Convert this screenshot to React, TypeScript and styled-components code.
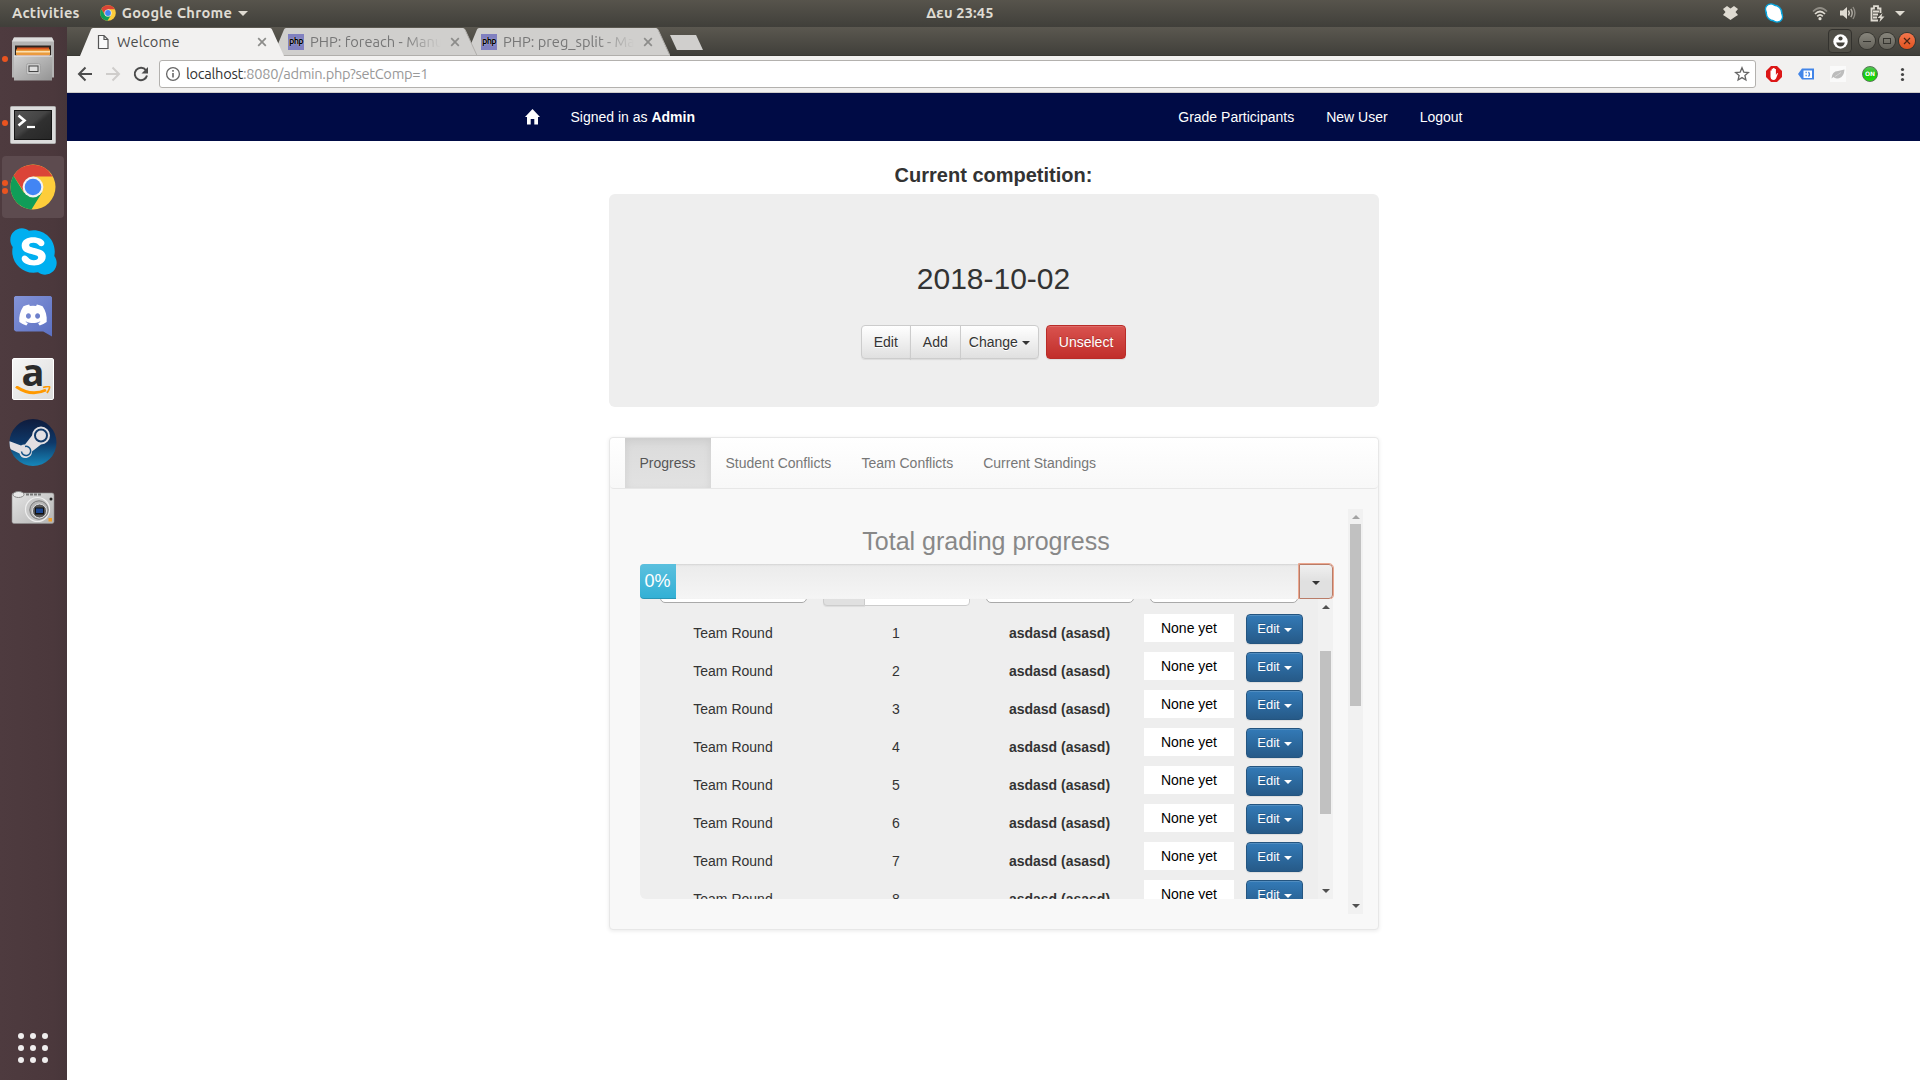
import React from "react";
import styled, { createGlobalStyle, css } from "styled-components";
import { FaSkype, FaDiscord } from "react-icons/fa";

const GlobalStyle = createGlobalStyle`
  *, *::before, *::after { box-sizing: border-box; }
  html, body { margin: 0; padding: 0; }
  body {
    background: #fff;
    font-family: "Liberation Sans", Arial, sans-serif;
    font-size: 14px;
    line-height: 20px;
    color: #333;
    overflow: hidden;
  }
  svg { display: block; flex: none; }
`;

const uiFont = '"Ubuntu", "Noto Sans", "Open Sans", sans-serif';

const Desktop = styled.div`
  display: flex;
  flex-direction: column;
  width: 1920px;
  height: 1080px;
  overflow: hidden;
`;

/* ---------- system bar ---------- */

const SystemBar = styled.header`
  flex: none;
  display: grid;
  grid-template-columns: 1fr auto 1fr;
  align-items: center;
  height: 27px;
  padding: 0 12px 1px;
  background: linear-gradient(#57544c, #403f3a);
  color: #dfdbd2;
  font: 600 14.67px/26px ${uiFont};
`;

const SystemLeft = styled.div`
  display: flex;
  align-items: center;
`;

const SystemLabel = styled.span<{ $spacing?: number }>`
  letter-spacing: ${(p) => p.$spacing ?? 0}px;
  white-space: nowrap;
`;

const AppMenu = styled.div`
  display: flex;
  align-items: center;
  gap: 6px;
  margin-left: 20px;
`;

const SystemTray = styled.div`
  display: flex;
  align-items: center;
  justify-content: flex-end;
  padding-right: 3px;
`;

const TrayItem = styled.span<{ $gap: number }>`
  margin-left: ${(p) => p.$gap}px;
`;

const SystemCaret = styled.span`
  width: 0;
  height: 0;
  border: 5px solid transparent;
  border-top-color: #dfdbd2;
  border-bottom: 0;
`;

/* ---------- dock ---------- */

const Workspace = styled.div`
  flex: 1;
  display: flex;
  min-height: 0;
`;

const DockBar = styled.nav`
  flex: none;
  display: flex;
  flex-direction: column;
  width: 67px;
  padding-bottom: 8px;
  background: linear-gradient(90deg, #4e3b3f 0, #4b383c 80%, #47363a 100%);
`;

const DockItem = styled.div<{ $active?: boolean }>`
  display: flex;
  align-items: center;
  height: 62px;
  margin: 1px 3px 1px 2px;
  border-radius: 4px;
  background: ${(p) => (p.$active ? "#5d4b4f" : "transparent")};
`;

const RunningDots = styled.div`
  flex: none;
  display: flex;
  flex-direction: column;
  gap: 2px;
  width: 7px;
`;

const RunningDot = styled.i`
  width: 6px;
  height: 6px;
  border-radius: 50%;
  background: #e95420;
`;

const AppsGrid = styled.div`
  display: grid;
  grid-template-columns: repeat(3, 6px);
  gap: 6px;
  margin: auto 0 9px 18px;
`;

const AppsDot = styled.i`
  width: 6px;
  height: 6px;
  border-radius: 50%;
  background: #f0eeee;
`;

/* ---------- browser window ---------- */

const Browser = styled.main`
  flex: 1;
  display: flex;
  flex-direction: column;
  min-width: 0;
`;

const TabStrip = styled.div`
  flex: none;
  display: flex;
  align-items: flex-end;
  height: 29px;
  padding-left: 13px;
  background: linear-gradient(#5b5850, #403f3a);
  border-bottom: 1px solid #393833;
`;

const BrowserTab = styled.div<{ $order: number }>`
  position: relative;
  z-index: ${(p) => p.$order};
  display: flex;
  align-items: center;
  width: 204px;
  height: 28px;
  margin: 0 -11px -1px 0;
  padding: 0 17px 0 15px;
`;

const TabShape = styled.svg`
  position: absolute;
  inset: 0;
  z-index: -1;
`;

const TabTitle = styled.span<{ $muted?: boolean }>`
  flex: 1;
  margin: 0 9px 1px 6px;
  overflow: hidden;
  white-space: nowrap;
  font: 14.67px/26px ${uiFont};
  letter-spacing: ${(p) => (p.$muted ? 0 : 0.2)}px;
  color: ${(p) => (p.$muted ? "#777" : "#4c4c4c")};
  ${(p) =>
    p.$muted &&
    css`
      mask-image: linear-gradient(90deg, #000 72%, transparent 100%);
    `}
`;

const PhpBadge = styled.span`
  flex: none;
  width: 16px;
  height: 16px;
  background: #8080c0;
  color: #000;
  font: 600 9px/14px ${uiFont};
  letter-spacing: -0.6px;
  text-align: center;
  text-shadow: 0 0 1px #fff;
`;

const NewTab = styled.div`
  width: 33px;
  height: 15px;
  margin: 0 0 5px 11px;
  background: #d0cfcd;
  clip-path: polygon(0 0, 79% 0, 100% 100%, 21% 100%);
`;

const WindowControls = styled.div`
  display: flex;
  align-items: center;
  gap: 4px;
  height: 28px;
  margin-left: auto;
  padding: 0 5px 0 0;
`;

const ProfileButton = styled.div`
  display: grid;
  place-items: center;
  width: 24px;
  height: 24px;
  margin-right: 3px;
  border: 1px solid #33322e;
  border-radius: 4px;
  background: #504e47;
`;

const WindowButton = styled.div<{ $close?: boolean }>`
  display: grid;
  place-items: center;
  width: 16px;
  height: 16px;
  border-radius: 50%;
  background: ${(p) => (p.$close ? "linear-gradient(#f4764d, #e2531f)" : "linear-gradient(#87857c, #65635b)")};
  box-shadow: 0 0 0 1px #35342f;
`;

const Toolbar = styled.div`
  flex: none;
  display: flex;
  align-items: center;
  height: 37px;
  padding: 0 10px;
  background: #f2f1f0;
  border-bottom: 1px solid #cfcdca;
`;

const NavIcons = styled.div`
  display: flex;
  gap: 12px;
`;

const Omnibox = styled.div`
  flex: 1;
  display: flex;
  align-items: center;
  height: 28px;
  margin: 0 10px;
  padding: 0 5px;
  border: 1px solid #b3b1ae;
  border-radius: 3px;
  background: #fff;
`;

const Url = styled.span`
  flex: 1;
  margin-left: 5px;
  font: 14.67px/26px ${uiFont};
  letter-spacing: -0.3px;
  color: #999;
`;

const UrlHost = styled.span`
  color: #333;
`;

const Extensions = styled.div`
  display: flex;
  align-items: center;
  gap: 16px;
`;

const OnBadge = styled.span`
  width: 16px;
  height: 16px;
  border: 1px solid #547754;
  border-radius: 50%;
  background: linear-gradient(#55c855, #16c60c 50%, #22e010);
  color: #fff;
  font: 700 6px/14px "DejaVu Sans", sans-serif;
  text-align: center;
`;

/* ---------- web page ---------- */

const PageNav = styled.nav`
  flex: none;
  display: flex;
  justify-content: center;
  height: 48px;
  background: #000b45;
  color: #fff;
`;

const PageNavInner = styled.div`
  display: flex;
  align-items: center;
  width: 938px;
`;

const SignedIn = styled.span`
  margin-left: 31px;
`;

const PageLinks = styled.div`
  display: flex;
  gap: 32px;
  margin-left: auto;
`;

const PageBody = styled.section`
  flex: 1;
  display: flex;
  flex-direction: column;
  align-items: center;
  padding-top: 23px;
  background: #fff;
`;

const Title = styled.h3`
  margin: 0 0 8px;
  font-size: 20px;
  font-weight: 700;
  line-height: 22px;
`;

const Jumbotron = styled.div`
  display: flex;
  flex-direction: column;
  align-items: center;
  width: 770px;
  height: 213px;
  padding-top: 68px;
  border-radius: 6px;
  background: #eee;
`;

const CompetitionDate = styled.h2`
  margin: 0 0 30px;
  font-size: 30px;
  font-weight: 400;
  line-height: 33px;
`;

const ButtonRow = styled.div`
  display: flex;
  gap: 7px;
`;

const ButtonGroup = styled.div`
  display: flex;
  border-radius: 4px;
`;

const Caret = styled.i<{ $gap: number }>`
  display: inline-block;
  width: 0;
  height: 0;
  margin-left: ${(p) => p.$gap}px;
  border: 4px solid transparent;
  border-top-color: currentColor;
  border-bottom: 0;
  vertical-align: middle;
`;

const Button = styled.button<{ $kind: "default" | "danger" | "primary"; $pad?: number }>`
  height: 34px;
  padding: 0 ${(p) => p.$pad ?? 12}px;
  border: 1px solid #ccc;
  border-radius: 4px;
  font: 14px/20px "Liberation Sans", Arial, sans-serif;
  white-space: nowrap;
  ${(p) =>
    p.$kind === "default" &&
    css`
      color: #333;
      background: linear-gradient(#fff, #e0e0e0);
      text-shadow: 0 1px 0 #fff;
      box-shadow: inset 0 1px 0 rgba(255, 255, 255, 0.15), 0 1px 1px rgba(0, 0, 0, 0.075);
      &:not(:first-child) { margin-left: -1px; border-top-left-radius: 0; border-bottom-left-radius: 0; }
      &:not(:last-child) { border-top-right-radius: 0; border-bottom-right-radius: 0; }
    `}
  ${(p) =>
    p.$kind === "danger" &&
    css`
      color: #fff;
      border-color: #b92c28;
      background: linear-gradient(#d9534f, #c12e2a);
      text-shadow: 0 -1px 0 rgba(0, 0, 0, 0.2);
      box-shadow: inset 0 1px 0 rgba(255, 255, 255, 0.15), 0 1px 1px rgba(0, 0, 0, 0.075);
    `}
  ${(p) =>
    p.$kind === "primary" &&
    css`
      width: 57px;
      height: 30px;
      padding-right: 9px;
      font-size: 13px;
      line-height: 18px;
      color: #fff;
      border-color: #245580;
      background: linear-gradient(#337ab7, #265a88);
      text-shadow: 0 -1px 0 rgba(0, 0, 0, 0.2);
      box-shadow: inset 0 1px 0 rgba(255, 255, 255, 0.15), 0 1px 1px rgba(0, 0, 0, 0.075);
    `}
`;

const Panel = styled.div`
  display: flex;
  flex-direction: column;
  width: 770px;
  height: 493px;
  margin-top: 30px;
  border: 1px solid #e7e7e7;
  border-radius: 4px;
  background: #f8f8f8;
  box-shadow: 0 1px 4px rgba(0, 0, 0, 0.09);
`;

const PanelTabs = styled.div`
  flex: none;
  display: flex;
  height: 51px;
  padding-left: 15px;
  border-bottom: 1px solid #e7e7e7;
  border-radius: 4px;
  background: linear-gradient(#fff, #f8f8f8);
`;

const PanelTab = styled.a<{ $active?: boolean }>`
  padding: 15px;
  color: ${(p) => (p.$active ? "#555" : "#777")};
  text-shadow: 0 1px 0 rgba(255, 255, 255, 0.25);
  ${(p) =>
    p.$active &&
    css`
      background: linear-gradient(#dbdbdb, #e2e2e2);
      box-shadow: inset 0 3px 9px rgba(0, 0, 0, 0.075);
    `}
`;

const ScrollArea = styled.div`
  display: flex;
  height: 405px;
  margin: 20px 15px 0;
`;

const ScrollContent = styled.div`
  flex: 1;
  display: flex;
  flex-direction: column;
  padding: 18px 15px 0;
`;

const ProgressTitle = styled.h4`
  margin: 0 0 9px;
  font-size: 25px;
  font-weight: 400;
  line-height: 28px;
  color: #888;
  text-align: center;
`;

const ProgressRow = styled.div`
  display: flex;
  height: 35px;
`;

const ProgressTrack = styled.div`
  flex: 1;
  border-radius: 4px 0 0 0;
  background: linear-gradient(#ebebeb, #f5f5f5);
  box-shadow: inset 0 1px 2px rgba(0, 0, 0, 0.1);
`;

const ProgressValue = styled.div`
  width: 36px;
  height: 35px;
  border-radius: 4px 0 0 4px;
  background: linear-gradient(#5bc0de, #31b0d5);
  box-shadow: inset 0 -1px 0 rgba(0, 0, 0, 0.15);
  color: #fff;
  font-size: 18px;
  line-height: 34px;
  text-align: center;
`;

const ProgressToggle = styled.button`
  display: grid;
  place-items: center;
  width: 34px;
  padding: 3px 0 0;
  border: 1px solid #b97c68;
  border-radius: 0 4px 4px 0;
  outline: 1px solid #eba78f;
  outline-offset: 0;
  background: linear-gradient(#f0f0f0, #e0e0e0 50%, #e0e0e0);
  color: #333;
`;

const RoundList = styled.div`
  display: flex;
  height: 300px;
  border-radius: 0 0 0 6px;
  background: #eee;
  overflow: hidden;
`;

const RoundRows = styled.div`
  flex: 1;
  height: 300px;
  padding: 0 12px;
  overflow: hidden;
`;

const columns = css`
  display: grid;
  grid-template-columns: 163px 163px 164px 1fr;
`;

const FilterRow = styled.div`
  ${columns}
  height: 41px;
  margin-top: -30px;
`;

const FilterCell = styled.div`
  padding: 0 8px;
`;

const FilterSelect = styled.div`
  height: 34px;
  border: 1px solid #a9a9a9;
  border-radius: 5px;
  background: #fff;
`;

const FilterGroup = styled.div`
  display: flex;
  height: 37px;
`;

const FilterAddon = styled.div`
  width: 42px;
  border: 1px solid #ccc;
  border-radius: 4px 0 0 4px;
  background: #e0e0e0;
  box-shadow: 0 1px 1px rgba(0, 0, 0, 0.075);
`;

const FilterInput = styled.div`
  flex: 1;
  margin-left: -1px;
  border: 1px solid #ccc;
  border-radius: 0 4px 4px 0;
  background: #fff;
`;

const RoundRow = styled.div`
  ${columns}
  height: 38px;
  padding-top: 4px;
`;

const RoundCell = styled.div<{ $strong?: boolean }>`
  padding-top: 9px;
  text-align: center;
  font-weight: ${(p) => (p.$strong ? 700 : 400)};
`;

const RoundActions = styled.div`
  display: flex;
  align-items: flex-start;
  gap: 12px;
  padding-left: 2px;
`;

const ResultBox = styled.span`
  width: 90px;
  height: 28px;
  padding-left: 1px;
  background: #fff;
  color: #000;
  line-height: 28px;
  text-align: center;
`;

const ScrollbarTrack = styled.div`
  flex: none;
  display: flex;
  flex-direction: column;
  align-items: center;
  width: 15px;
  background: #f1f1f1;
`;

const ScrollThumb = styled.div<{ $top: number; $size: number }>`
  width: 11px;
  height: ${(p) => p.$size}px;
  margin-top: ${(p) => p.$top}px;
  background: #c1c1c1;
`;

const ScrollArrow = styled.div<{ $down?: boolean; $dim?: boolean }>`
  flex: none;
  display: grid;
  place-items: center;
  width: 15px;
  height: 15px;
  padding: 0 0 ${(p) => (p.$down ? 1 : 0)}px 1px;
  ${(p) => p.$down && "margin-top: auto;"}
  &::before {
    content: "";
    border: 4px solid transparent;
    ${(p) =>
      p.$down
        ? "border-top-color: #505050; border-bottom: 0;"
        : `border-bottom-color: ${p.$dim ? "#a3a3a3" : "#505050"}; border-top: 0;`}
  }
`;

/* ---------- drawings ---------- */

const ChromeLogo = ({ size }: { size: number }) => (
  <svg width={size} height={size} viewBox="0 0 46 46">
    <circle cx="23" cy="23" r="22.5" fill="#fdcd3b" />
    <path d="M3.5 11.8A22.5 22.5 0 0 1 42.6 12.5H23L14 28Z" fill="#db4437" />
    <path d="M3.5 11.8A22.5 22.5 0 0 0 21.5 45.4L32.2 28.2 23 33 13.8 28.5Z" fill="#109d58" />
    <circle cx="23" cy="23" r="10.4" fill="#f3f3f3" />
    <circle cx="23" cy="23" r="8.3" fill="#4285f4" />
  </svg>
);

const FilesIcon = () => (
  <svg width="48" height="48" viewBox="0 0 48 48">
    <defs>
      <linearGradient id="cab" x1="0" y1="0" x2="1" y2="1">
        <stop offset="0" stopColor="#cfcfcf" /><stop offset="1" stopColor="#949494" />
      </linearGradient>
    </defs>
    <path d="M5 2.5h38l2 4v36H3v-36z" fill="#b4b4b4" />
    <path d="M5 2.5h38l2 4H3z" fill="#dcdcdc" />
    <path d="M6 10.5h36v11H6z" fill="#2c2420" />
    <path d="M8 12.5h32v9H8z" fill="#d9541e" />
    <path d="M7 14.5h34V20H7z" fill="#ea9b3e" />
    <path d="M7 16h34v1.5H7z" fill="#fbe0b0" />
    <path d="M5 20.5h38v25H5z" fill="url(#cab)" />
    <path d="M5 20.5h38v1H5z" fill="#ececec" />
    <rect x="17.5" y="28.5" width="14" height="11" rx="2" fill="#c9c9c9" stroke="#a2a2a2" />
    <rect x="20" y="31" width="9" height="5.5" fill="#dedede" stroke="#444" />
  </svg>
);

const TerminalIcon = () => (
  <svg width="48" height="48" viewBox="0 0 48 48">
    <defs>
      <linearGradient id="term" x1="0" y1="0" x2="1" y2="1">
        <stop offset="0" stopColor="#555" /><stop offset=".45" stopColor="#444" /><stop offset=".55" stopColor="#303030" /><stop offset="1" stopColor="#272727" />
      </linearGradient>
    </defs>
    <rect x="1.5" y="7.5" width="45" height="37" rx="1" fill="#dcdcdc" stroke="#b2b2b2" />
    <rect x="5.5" y="11.5" width="37" height="29" fill="url(#term)" stroke="#151515" />
    <path d="M9.5 16.5l6 5-6 5" fill="none" stroke="#fff" strokeWidth="2.6" />
    <path d="M18 28h8" stroke="#fff" strokeWidth="2.2" />
  </svg>
);

const SkypeShape = styled.div`
  display: flex;
  align-items: center;
  width: 48px;
  height: 48px;
  color: #00aff0;
  background: radial-gradient(circle, #fff 0 17px, transparent 17.5px);
  svg { margin: 0 -2.5px; }
`;

const DiscordTile = styled.div`
  display: flex;
  justify-content: center;
  width: 38px;
  height: 41px;
  margin: 2px 0 0 5px;
  padding-top: 4px;
  color: #fff;
  background: linear-gradient(135deg, #8494d8, #5b70c2);
  clip-path: polygon(5% 0, 95% 0, 100% 4%, 100% 100%, 77% 88%, 5% 88%, 0 84%, 0 4%);
`;

const AmazonTile = styled.div`
  display: flex;
  flex-direction: column;
  align-items: center;
  width: 42px;
  height: 42px;
  margin-left: 3px;
  border: 1px solid #fff;
  border-radius: 2px;
  background: linear-gradient(135deg, #f6f6f6, #dcdcdc);
`;

const AmazonLetter = styled.span`
  height: 27px;
  color: #2b2b2b;
  font: 700 38px/25px "Open Sans", sans-serif;
`;

const SteamIcon = () => (
  <svg width="48" height="48" viewBox="0 1 48 48">
    <defs>
      <linearGradient id="steam" x1="0" y1="0" x2="0" y2="1">
        <stop offset="0" stopColor="#0f1b3c" /><stop offset=".5" stopColor="#0e3868" /><stop offset="1" stopColor="#1687ba" />
      </linearGradient>
      <clipPath id="steam-round"><circle cx="24" cy="24.5" r="23.5" /></clipPath>
    </defs>
    <circle cx="24" cy="24.5" r="23.5" fill="url(#steam)" />
    <g clipPath="url(#steam-round)">
      <path d="M-1 22.5L12 27.5a6 6 0 0 1 4-1l7-9a9 9 0 1 1 9 9l-9 7a6.4 6.4 0 0 1-12.5 2L-1 30z" fill="#e2dfe2" />
      <circle cx="32" cy="17.5" r="6" fill="#e2dfe2" stroke="#123a69" strokeWidth="2" />
      <path d="M12.5 33.5a4.6 4.6 0 1 0 3.5-5" fill="none" stroke="#145386" strokeWidth="1.5" />
    </g>
  </svg>
);

const CameraIcon = () => (
  <svg width="48" height="48" viewBox="0 0 48 48">
    <defs>
      <linearGradient id="cam" x1="0" y1="0" x2="1" y2="1">
        <stop offset="0" stopColor="#e4e4e4" /><stop offset="1" stopColor="#b3b3b3" />
      </linearGradient>
    </defs>
    <rect x="3" y="10" width="42" height="30.5" rx="2" fill="url(#cam)" stroke="#8f8f8f" strokeWidth=".6" />
    <path d="M17 11.5h15" stroke="#777" strokeWidth="2" strokeDasharray="3 1" />
    <ellipse cx="9.5" cy="11.5" rx="5.5" ry="3" fill="#e8e8e8" stroke="#888" />
    <circle cx="28.5" cy="26.5" r="12" fill="#c9c9c9" stroke="#efefef" strokeWidth="1.2" />
    <circle cx="30" cy="27" r="9.2" fill="#b5b5b5" stroke="#777" />
    <circle cx="30.5" cy="28" r="7" fill="#555" stroke="#e2e2e2" />
    <rect x="26" y="24.5" width="9" height="7" fill="#111" />
    <rect x="27" y="25.5" width="7" height="4.5" fill="#1b458f" />
    <circle cx="42" cy="16" r="1.5" fill="#222" />
    <rect x="39.5" y="35" width="3.5" height="3.5" fill="#ef9f2a" />
  </svg>
);

const stroke = { fill: "none", stroke: "currentColor" } as const;

const TabClose = () => (
  <svg width="10" height="10" viewBox="0 0 10 10">
    <path d="M1.2 1.2l7.6 7.6M8.8 1.2L1.2 8.8" fill="none" stroke="#8c8c8a" strokeWidth="1.7" />
  </svg>
);

const Arrow = ({ flip, color }: { flip?: boolean; color: string }) => (
  <svg width="16" height="16" viewBox="0 0 16 16" transform={flip ? "scale(-1 1)" : undefined}>
    <path d="M15 8H2.5M8.5 1.5L2 8l6.5 6.5" fill="none" stroke={color} strokeWidth="2" />
  </svg>
);

/* ---------- components ---------- */

const Scrollbar = ({ top, size, dim }: { top: number; size: number; dim?: boolean }) => (
  <ScrollbarTrack>
    <ScrollArrow $dim={dim} />
    <ScrollThumb $top={top} $size={size} />
    <ScrollArrow $down />
  </ScrollbarTrack>
);

type TabProps = { title: string; active?: boolean; order: number };

const Tab = ({ title, active, order }: TabProps) => (
  <BrowserTab $order={order}>
    <TabShape width="204" height="28" viewBox="0 0 204 28">
      <path
        d="M0 28L11 1.5Q11.5 0 13 0H190Q191.5 0 192 1.5L204 28Z"
        fill={active ? "#f2f1f0" : "#d0cfcd"}
      />
      {!active && <path d="M0 27.5H204L192 1.5" fill="none" stroke="#b0aeab" />}
    </TabShape>
    {active ? (
      <svg width="16" height="16" viewBox="0 0 16 16">
        <path d="M3.5 1.5h5.5l4 4v9h-9.5zM9 1.5v4h4" fill="#fafafa" stroke="#555" strokeWidth="1.2" />
      </svg>
    ) : (
      <PhpBadge>php</PhpBadge>
    )}
    <TabTitle $muted={!active}>{title}</TabTitle>
    <TabClose />
  </BrowserTab>
);

const rounds = [1, 2, 3, 4, 5, 6, 7, 8];

const Dock = () => (
  <DockBar>
    <DockItem><RunningDots><RunningDot /></RunningDots><FilesIcon /></DockItem>
    <DockItem><RunningDots><RunningDot /></RunningDots><TerminalIcon /></DockItem>
    <DockItem $active>
      <RunningDots><RunningDot /><RunningDot /></RunningDots>
      <svg width="1" height="1" /><ChromeLogo size={46} />
    </DockItem>
    <DockItem><RunningDots /><SkypeShape><FaSkype size={53} /></SkypeShape></DockItem>
    <DockItem><RunningDots /><DiscordTile><FaDiscord size={30} /></DiscordTile></DockItem>
    <DockItem>
      <RunningDots />
      <AmazonTile>
        <AmazonLetter>a</AmazonLetter>
        <svg width="38" height="11" viewBox="0 0 38 11">
          <path d="M2 .5Q17 11 32 4" fill="none" stroke="#f90" strokeWidth="3" />
          <path d="M29 1.5q6-1.5 6.5-.5t-2.5 6" fill="none" stroke="#f90" strokeWidth="1.8" />
        </svg>
      </AmazonTile>
    </DockItem>
    <DockItem><RunningDots /><SteamIcon /></DockItem>
    <DockItem><RunningDots /><CameraIcon /></DockItem>
    <AppsGrid>{Array.from({ length: 9 }, (_, i) => <AppsDot key={i} />)}</AppsGrid>
  </DockBar>
);

const TopBar = () => (
  <SystemBar>
    <SystemLeft>
      <SystemLabel $spacing={0.25}>Activities</SystemLabel>
      <AppMenu>
        <ChromeLogo size={16} />
        <SystemLabel $spacing={0.3}>Google Chrome</SystemLabel>
        <SystemCaret />
      </AppMenu>
    </SystemLeft>
    <SystemLabel $spacing={0.15}>Δευ 23:45</SystemLabel>
    <SystemTray>
      <svg width="15" height="14" viewBox="0 0 15 14">
        <path d="M4 0L7.5 2.5 11 0l4 3-2.5 3L15 9l-2.5 1.5L7.5 14l-5-3.5L0 9l2.5-3L0 3z" fill="#dfdbd2" />
      </svg>
      <TrayItem $gap={26}>
        <svg width="20" height="20" viewBox="0 0 20 20">
          <g fill="#fff" stroke="#0aa4dc" strokeWidth="1.5">
            <circle cx="7" cy="6.5" r="5.5" /><circle cx="13" cy="13.5" r="5.5" /><circle cx="10" cy="10" r="7.8" />
          </g>
          <circle cx="7" cy="6.5" r="4.8" fill="#fff" /><circle cx="13" cy="13.5" r="4.8" fill="#fff" />
        </svg>
      </TrayItem>
      <TrayItem $gap={28}>
        <svg width="16" height="15" viewBox="0 0 16 15" {...stroke} strokeWidth="1.7">
          <path d="M1 5.5Q8-1.5 15 5.5" opacity=".45" />
          <path d="M3 8Q8 3 13 8M5.2 10.3Q8 7.5 10.8 10.3" />
          <circle cx="8" cy="12.7" r="1.6" fill="currentColor" stroke="none" />
        </svg>
      </TrayItem>
      <TrayItem $gap={12}>
        <svg width="16" height="14" viewBox="0 0 16 14" {...stroke} strokeWidth="1.4">
          <path d="M0 4.5h3L7 1v12L3 9.5H0z" fill="currentColor" stroke="none" />
          <path d="M8.5 4.5q1.6 2.5 0 5" /><path d="M10.8 2.8q2.8 4.2 0 8.4" opacity=".7" /><path d="M13 1q3.8 6 0 12" opacity=".45" />
        </svg>
      </TrayItem>
      <TrayItem $gap={14}>
        <svg width="15" height="17" viewBox="0 0 15 17" {...stroke} strokeWidth="1.8">
          <path d="M8 15.5H1.5v-12H4V1.2h4v2.3h2.5V8M3 6.5h6M3 9.5h5M3 12.5h4" />
          <path d="M12.5 8l-5 5h3l-1 4 5-5.5h-3z" fill="currentColor" stroke="none" />
        </svg>
      </TrayItem>
      <TrayItem $gap={10}><SystemCaret as="div" /></TrayItem>
    </SystemTray>
  </SystemBar>
);

const BrowserChrome = () => (
  <>
    <TabStrip>
      <Tab title="Welcome" active order={3} />
      <Tab title="PHP: foreach - Manual" order={2} />
      <Tab title="PHP: preg_split - Manual" order={1} />
      <NewTab />
      <WindowControls>
        <ProfileButton>
          <svg width="15" height="15" viewBox="0 0 15 15">
            <circle cx="7.5" cy="7.5" r="7.2" fill="#fff" />
            <circle cx="7.5" cy="4.5" r="2.1" fill="#45433d" />
            <path d="M3.2 8.5h8.6q-.8 4-4.3 4t-4.3-4z" fill="#45433d" />
          </svg>
        </ProfileButton>
        <WindowButton><svg width="8" height="8"><path d="M0 4.5h8" stroke="#35342f" /></svg></WindowButton>
        <WindowButton><svg width="8" height="8"><rect x=".5" y="1.5" width="7" height="5" fill="none" stroke="#35342f" /></svg></WindowButton>
        <WindowButton $close><svg width="8" height="8"><path d="M1 1l6 6M7 1L1 7" stroke="#4b2413" strokeWidth="1.2" /></svg></WindowButton>
      </WindowControls>
    </TabStrip>
    <Toolbar>
      <NavIcons>
        <Arrow color="#4c4c4c" />
        <Arrow flip color="#cfcdcb" />
        <svg width="16" height="16" viewBox="0 0 16 16">
          <path d="M13 4.3A6.2 6.2 0 1 0 14 9.5" fill="none" stroke="#4c4c4c" strokeWidth="2" />
          <path d="M15 1v6.5H8.5z" fill="#4c4c4c" />
        </svg>
      </NavIcons>
      <Omnibox>
        <svg width="16" height="16" viewBox="0 0 16 16">
          <circle cx="8" cy="8" r="6.4" fill="none" stroke="#666" strokeWidth="1.3" />
          <path d="M8 7v4.5M8 4v1.7" stroke="#666" strokeWidth="1.6" />
        </svg>
        <Url><UrlHost>localhost</UrlHost>:8080/admin.php?setComp=1</Url>
        <svg width="16" height="16" viewBox="0 0 16 16">
          <path d="M8 1.8l1.8 4.3 4.6.4-3.5 3 1 4.5L8 11.6 4.1 14l1-4.5-3.5-3 4.6-.4z" fill="none" stroke="#666" strokeWidth="1.3" />
        </svg>
      </Omnibox>
      <Extensions>
        <svg width="16" height="16" viewBox="0 0 16 16">
          <path d="M5 0h6l5 5v6l-5 5H5l-5-5V5z" fill="#dc1717" />
          <path d="M4.5 8V4.500h1.200V8V2.800h1.400V7.500V2h1.500v5.500V3h1.300V9l1.300-2 .8.500-2 5q-.7 1.500-3 1.500-2.500-.3-2.500-3z" fill="#fff" />
        </svg>
        <svg width="16" height="16" viewBox="0 0 16 16">
          <path d="M0 8l4-5.5h12v11H4z" fill="#4285e8" />
          <rect x="5.5" y="4.5" width="8.5" height="7.5" fill="#fff" />
          <path d="M7.5 6.5h1.3M7.5 9.5h1.3M10.5 5.8q2 2.4 0 4.8" fill="none" stroke="#4285e8" strokeWidth="1.3" />
        </svg>
        <svg width="16" height="16" viewBox="0 0 16 16">
          <rect width="16" height="16" fill="#fafafa" />
          <path d="M1.5 12.5Q2 5 8 5l6.5-1.5Q14 11 9 12.2 5 13 3.5 11z" fill="#bdbdbd" />
          <path d="M5 10.500L11 6.5" stroke="#d5d5d5" />
        </svg>
        <OnBadge>ON</OnBadge>
        <svg width="16" height="16" viewBox="0 0 16 16" fill="#444">
          <circle cx="8.5" cy="3.5" r="1.6" /><circle cx="8.5" cy="8.5" r="1.6" /><circle cx="8.5" cy="13.5" r="1.6" />
        </svg>
      </Extensions>
    </Toolbar>
  </>
);

const RoundTable = () => (
  <RoundList>
    <RoundRows>
      <FilterRow>
        <FilterCell><FilterSelect /></FilterCell>
        <FilterCell><FilterGroup><FilterAddon /><FilterInput /></FilterGroup></FilterCell>
        <FilterCell><FilterSelect /></FilterCell>
        <FilterCell><FilterSelect /></FilterCell>
      </FilterRow>
      {rounds.map((n) => (
        <RoundRow key={n}>
          <RoundCell>Team Round</RoundCell>
          <RoundCell>{n}</RoundCell>
          <RoundCell $strong>asdasd (asasd)</RoundCell>
          <RoundActions>
            <ResultBox>None yet</ResultBox>
            <Button $kind="primary" $pad={10}>Edit<Caret $gap={4} /></Button>
          </RoundActions>
        </RoundRow>
      ))}
    </RoundRows>
    <Scrollbar top={37} size={163} />
  </RoundList>
);

const AdminPage = () => (
  <>
    <PageNav>
      <PageNavInner>
        <svg width="15" height="16" viewBox="0 0 15 16">
          <path d="M7.5 0L15 8h-2v7.5H9.3V10H5.7v5.5H2V8H0z" fill="#fff" />
        </svg>
        <SignedIn>Signed in as <b>Admin</b></SignedIn>
        <PageLinks>
          <span>Grade Participants</span>
          <span>New User</span>
          <span>Logout</span>
        </PageLinks>
      </PageNavInner>
    </PageNav>
    <PageBody>
      <Title>Current competition:</Title>
      <Jumbotron>
        <CompetitionDate>2018-10-02</CompetitionDate>
        <ButtonRow>
          <ButtonGroup>
            <Button $kind="default">Edit</Button>
            <Button $kind="default">Add</Button>
            <Button $kind="default" $pad={8}>Change<Caret $gap={4} /></Button>
          </ButtonGroup>
          <Button $kind="danger">Unselect</Button>
        </ButtonRow>
      </Jumbotron>
      <Panel>
        <PanelTabs>
          <PanelTab $active>Progress</PanelTab>
          <PanelTab>Student Conflicts</PanelTab>
          <PanelTab>Team Conflicts</PanelTab>
          <PanelTab>Current Standings</PanelTab>
        </PanelTabs>
        <ScrollArea>
          <ScrollContent>
            <ProgressTitle>Total grading progress</ProgressTitle>
            <ProgressRow>
              <ProgressTrack><ProgressValue>0%</ProgressValue></ProgressTrack>
              <ProgressToggle><Caret $gap={0} /></ProgressToggle>
            </ProgressRow>
            <RoundTable />
          </ScrollContent>
          <Scrollbar top={0} size={182} dim />
        </ScrollArea>
      </Panel>
    </PageBody>
  </>
);

export default function App() {
  return (
    <Desktop>
      <GlobalStyle />
      <TopBar />
      <Workspace>
        <Dock />
        <Browser>
          <BrowserChrome />
          <AdminPage />
        </Browser>
      </Workspace>
    </Desktop>
  );
}
